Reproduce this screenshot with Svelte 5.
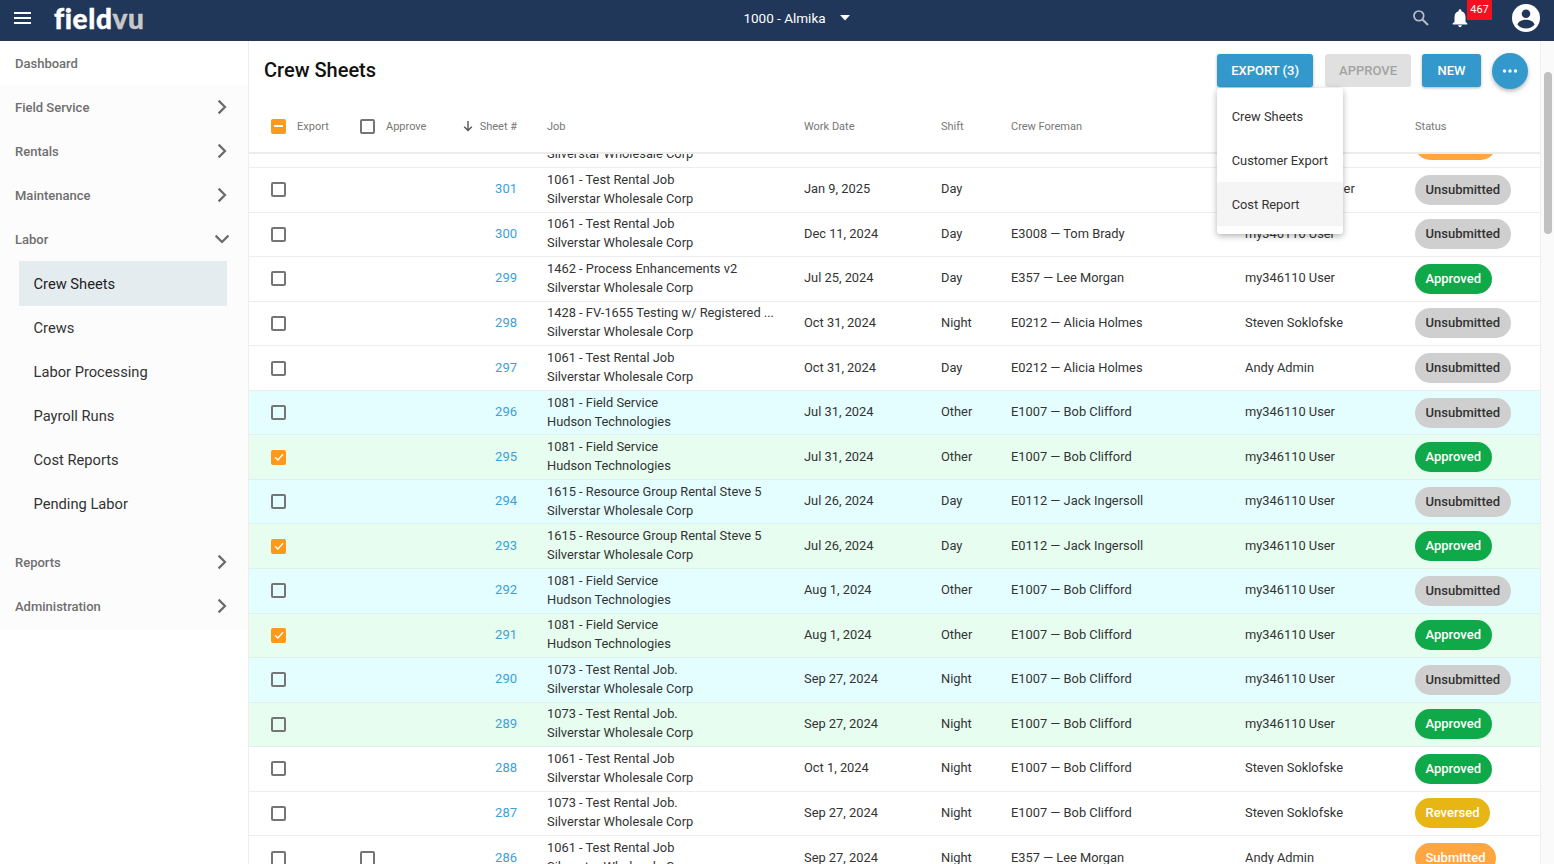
<script lang="ts">
	const navTop = [
		{ label: 'Field Service', open: false },
		{ label: 'Rentals', open: false },
		{ label: 'Maintenance', open: false },
		{ label: 'Labor', open: true }
	];
	const labor = ['Crew Sheets', 'Crews', 'Labor Processing', 'Payroll Runs', 'Cost Reports', 'Pending Labor'];
	const navBottom = ['Reports', 'Administration'];

	const silver = 'Silverstar Wholesale Corp';
	const hudson = 'Hudson Technologies';
	const bob = 'E1007 — Bob Clifford';
	const me = 'my346110 User';
	const steven = 'Steven Soklofske';

	const rows = [
		{ id: 302, job: '1061 - Test Rental Job', co: silver, date: 'Jan 9, 2025', shift: 'Day', foreman: '', by: '', status: 'Submitted' },
		{ id: 301, job: '1061 - Test Rental Job', co: silver, date: 'Jan 9, 2025', shift: 'Day', foreman: '', by: 'Customer Manager', status: 'Unsubmitted' },
		{ id: 300, job: '1061 - Test Rental Job', co: silver, date: 'Dec 11, 2024', shift: 'Day', foreman: 'E3008 — Tom Brady', by: me, status: 'Unsubmitted' },
		{ id: 299, job: '1462 - Process Enhancements v2', co: silver, date: 'Jul 25, 2024', shift: 'Day', foreman: 'E357 — Lee Morgan', by: me, status: 'Approved' },
		{ id: 298, job: '1428 - FV-1655 Testing w/ Registered ...', co: silver, date: 'Oct 31, 2024', shift: 'Night', foreman: 'E0212 — Alicia Holmes', by: steven, status: 'Unsubmitted' },
		{ id: 297, job: '1061 - Test Rental Job', co: silver, date: 'Oct 31, 2024', shift: 'Day', foreman: 'E0212 — Alicia Holmes', by: 'Andy Admin', status: 'Unsubmitted' },
		{ id: 296, job: '1081 - Field Service', co: hudson, date: 'Jul 31, 2024', shift: 'Other', foreman: bob, by: me, status: 'Unsubmitted', tint: 'cyan' },
		{ id: 295, job: '1081 - Field Service', co: hudson, date: 'Jul 31, 2024', shift: 'Other', foreman: bob, by: me, status: 'Approved', tint: 'green', checked: true },
		{ id: 294, job: '1615 - Resource Group Rental Steve 5', co: silver, date: 'Jul 26, 2024', shift: 'Day', foreman: 'E0112 — Jack Ingersoll', by: me, status: 'Unsubmitted', tint: 'cyan' },
		{ id: 293, job: '1615 - Resource Group Rental Steve 5', co: silver, date: 'Jul 26, 2024', shift: 'Day', foreman: 'E0112 — Jack Ingersoll', by: me, status: 'Approved', tint: 'green', checked: true },
		{ id: 292, job: '1081 - Field Service', co: hudson, date: 'Aug 1, 2024', shift: 'Other', foreman: bob, by: me, status: 'Unsubmitted', tint: 'cyan' },
		{ id: 291, job: '1081 - Field Service', co: hudson, date: 'Aug 1, 2024', shift: 'Other', foreman: bob, by: me, status: 'Approved', tint: 'green', checked: true },
		{ id: 290, job: '1073 - Test Rental Job.', co: silver, date: 'Sep 27, 2024', shift: 'Night', foreman: bob, by: me, status: 'Unsubmitted', tint: 'cyan' },
		{ id: 289, job: '1073 - Test Rental Job.', co: silver, date: 'Sep 27, 2024', shift: 'Night', foreman: bob, by: me, status: 'Approved', tint: 'green' },
		{ id: 288, job: '1061 - Test Rental Job', co: silver, date: 'Oct 1, 2024', shift: 'Night', foreman: bob, by: steven, status: 'Approved' },
		{ id: 287, job: '1073 - Test Rental Job.', co: silver, date: 'Sep 27, 2024', shift: 'Night', foreman: bob, by: steven, status: 'Reversed' },
		{ id: 286, job: '1061 - Test Rental Job', co: silver, date: 'Sep 27, 2024', shift: 'Night', foreman: 'E357 — Lee Morgan', by: 'Andy Admin', status: 'Submitted', approvable: true }
	];

	const exportOptions = ['Crew Sheets', 'Customer Export', 'Cost Report'];
</script>

{#snippet chevron(open)}
	<svg class="chev" class:open viewBox="0 0 24 24" width="24" height="24">
		<path d="M8.6 5.6 15 12l-6.4 6.4" fill="none" stroke="#6b6b6b" stroke-width="2.2" />
	</svg>
{/snippet}

{#snippet checkbox(state)}
	<span class="box {state}">
		{#if state === 'checked'}
			<svg viewBox="0 0 14 14" width="14" height="14"><path d="M3 7.2 5.9 10 11 4.2" fill="none" stroke="#fff" stroke-width="1.3" /></svg>
		{:else if state === 'mixed'}
			<i></i>
		{/if}
	</span>
{/snippet}

<div class="page">
	<header class="topbar">
		<div class="brand">
			<svg class="menu" viewBox="0 0 17 12" width="17" height="12">
				<path d="M0 1h17M0 6h17M0 11h17" stroke="#fff" stroke-width="1.9" fill="none" />
			</svg>
			<span class="logo">field<span>vu</span></span>
		</div>
		<div class="tenant">
			<span>1000 - Almika</span>
			<svg viewBox="0 0 10 6" width="10" height="6"><path d="M0 0h10L5 5.5z" fill="#fff" /></svg>
		</div>
		<div class="tools">
			<svg class="search" viewBox="0 0 20 20" width="18" height="18">
				<circle cx="7.6" cy="7.6" r="5.4" fill="none" stroke="#b9bec6" stroke-width="1.9" />
				<path d="m11.6 11.6 6.2 6.2" stroke="#b9bec6" stroke-width="2.2" />
			</svg>
			<div class="bell">
				<svg viewBox="0 0 24 24" width="22" height="22">
					<path d="M12 22c1.100 0 2-.9 2-2h-4c0 1.100.9 2 2 2zm6-6v-5c0-3.100-1.600-5.600-4.500-6.300V4c0-.8-.7-1.500-1.500-1.500s-1.500.7-1.500 1.500v.7C7.600 5.400 6 7.900 6 11v5l-2 2v1h16v-1z" fill="#fff" />
				</svg>
				<span class="badge">467</span>
			</div>
			<svg class="avatar" viewBox="0 0 28 28" width="28" height="28">
				<circle cx="14" cy="14" r="14" fill="#fff" />
				<circle cx="14" cy="9.700" r="4.300" fill="#21375a" />
				<path d="M5.400 20.500C6.400 17.200 10 15.700 14 15.700s7.600 1.500 8.600 4.800C20.600 23 17.500 24.400 14 24.400s-6.600-1.400-8.600-3.900z" fill="#21375a" />
			</svg>
		</div>
	</header>

	<div class="body">
		<nav class="side">
			<a class="top dash" href="#dashboard">Dashboard</a>
			<div class="rest">
				{#each navTop as item}
					<a class="top" href="#section">{item.label}{@render chevron(item.open)}</a>
				{/each}
				{#each labor as item, i}
					<a class="sub" class:current={i === 0} href="#labor">{item}</a>
				{/each}
				<div class="spacer"></div>
				{#each navBottom as item}
					<a class="top" href="#section">{item}{@render chevron(false)}</a>
				{/each}
			</div>
		</nav>

		<main class="main">
			<div class="content">
				<div class="titlebar">
					<h1>Crew Sheets</h1>
					<div class="actions">
						<div class="export-wrap">
							<button class="btn">EXPORT (3)</button>
							<ul class="menu-pop">
								{#each exportOptions as option, i}
									<li class:hover={i === 2}>{option}</li>
								{/each}
							</ul>
						</div>
						<button class="btn off">APPROVE</button>
						<button class="btn new">NEW</button>
						<button class="more" aria-label="More">
							<svg viewBox="0 0 16 4" width="16" height="4"><circle cx="2.500" cy="2" r="1.700" fill="#fff" /><circle cx="8" cy="2" r="1.700" fill="#fff" /><circle cx="13.500" cy="2" r="1.700" fill="#fff" /></svg>
						</button>
					</div>
				</div>

				<div class="grid thead">
					<div class="c-check">{@render checkbox('mixed')}<span>Export</span></div>
					<div class="c-check">{@render checkbox('empty')}<span>Approve</span></div>
					<div class="c-num">
						<svg viewBox="0 0 12 12" width="12" height="12"><path d="M6 1v9.500M2.200 6.800 6 10.500l3.800-3.700" fill="none" stroke="#555" stroke-width="1.400" /></svg>
						<span>Sheet #</span>
					</div>
					<div>Job</div>
					<div>Work Date</div>
					<div>Shift</div>
					<div>Crew Foreman</div>
					<div></div>
					<div>Status</div>
				</div>

				<div class="tbody">
					<div class="rows">
						{#each rows as row}
							<div class="grid row {row.tint ?? ''}">
								<div class="c-check">{@render checkbox(row.checked ? 'checked' : 'empty')}</div>
								<div class="c-check">{#if row.approvable}{@render checkbox('empty')}{/if}</div>
								<div class="c-num"><a href="#sheet">{row.id}</a></div>
								<div class="job"><div>{row.job}</div><div>{row.co}</div></div>
								<div>{row.date}</div>
								<div>{row.shift}</div>
								<div>{row.foreman}</div>
								<div>{row.by}</div>
								<div class="status"><span class="pill {row.status.toLowerCase()}">{row.status}</span></div>
							</div>
						{/each}
					</div>
				</div>
			</div>
			<div class="scrollbar"><div class="thumb"></div></div>
		</main>
	</div>
</div>

<style>
	:global(body) {
		font-family: Roboto, 'Liberation Sans', sans-serif;
		overflow: hidden;
	}

	.page {
		height: 864px;
		display: flex;
		flex-direction: column;
		overflow: hidden;
	}

	.topbar {
		height: 41px;
		flex: none;
		background: #21375a;
		display: grid;
		grid-template-columns: minmax(0, 1fr) auto minmax(0, 1fr);
		align-items: start;
		color: #fff;
	}

	.brand {
		display: flex;
		align-items: center;
		gap: 23px;
		padding-left: 14px;
		height: 36px;
	}

	.logo {
		font-family: Lato, sans-serif;
		font-weight: 900;
		font-size: 28px;
		line-height: 36px;
		letter-spacing: 0.6px;
		-webkit-text-stroke: 0.4px currentColor;
		color: #fff;
	}

	.logo span {
		color: #c8c8c8;
	}

	.tenant {
		display: flex;
		align-items: center;
		gap: 14px;
		font-size: 13.5px;
		height: 36px;
		padding-left: 39px;
	}

	.tools {
		display: flex;
		justify-content: flex-end;
		align-items: center;
		height: 36px;
		padding-right: 14px;
	}

	.bell {
		position: relative;
		width: 22px;
		height: 22px;
		margin-left: 19px;
		margin-right: 41px;
	}

	.badge {
		position: absolute;
		left: 18px;
		top: -7px;
		width: 25px;
		height: 20px;
		background: #f5101f;
		font-size: 11px;
		line-height: 19px;
		text-align: center;
	}

	.body {
		flex: 1;
		display: flex;
		min-height: 0;
	}

	.side {
		width: 248px;
		flex: none;
		border-right: 1px solid #eee;
		background: #fff;
	}

	.rest {
		background: #fcfcfc;
		padding-bottom: 1px;
	}

	.top {
		height: 44.1px;
		display: flex;
		align-items: center;
		justify-content: space-between;
		padding: 0 14px 0 15px;
		font-size: 13px;
		font-weight: 500;
		color: #6f6f6f;
		text-decoration: none;
	}

	.chev.open {
		transform: rotate(90deg);
	}

	.sub {
		display: flex;
		align-items: center;
		height: 44.1px;
		margin: 0 21px 0 19px;
		padding-left: 14.5px;
		font-size: 14.7px;
		color: #333;
		text-decoration: none;
	}

	.sub.current {
		background: #e5ecf0;
		color: #222;
	}

	.spacer {
		height: 14px;
	}

	.main {
		flex: 1;
		min-width: 0;
		display: flex;
	}

	.content {
		flex: 1;
		min-width: 0;
		display: flex;
		flex-direction: column;
	}

	.titlebar {
		height: 59px;
		flex: none;
		display: flex;
		align-items: center;
		justify-content: space-between;
		padding: 0 12px 0 15px;
	}

	h1 {
		margin: 0 0 2px;
		font-size: 20px;
		font-weight: 500;
		color: #111;
	}

	.actions {
		display: flex;
		align-items: center;
		gap: 11px;
	}

	.export-wrap {
		position: relative;
		display: flex;
		margin-right: 1px;
	}

	.btn {
		height: 33px;
		padding: 0 14px;
		border: none;
		border-radius: 3px;
		background: #3399cc;
		color: #fff;
		font: 500 13px Roboto, sans-serif;
		box-shadow: 0 1px 3px rgba(0, 0, 0, 0.3);
	}

	.btn.new {
		padding: 0 15.5px;
	}

	.btn.off {
		background: #e0e0e0;
		color: #a3a3a3;
		box-shadow: none;
	}

	.more {
		width: 36px;
		height: 36px;
		border: none;
		border-radius: 50%;
		background: #3399cc;
		display: flex;
		align-items: center;
		justify-content: center;
		box-shadow: 0 2px 4px rgba(0, 0, 0, 0.3);
		padding: 0;
	}

	.menu-pop {
		position: absolute;
		left: 0;
		top: 34px;
		width: 126px;
		margin: 0;
		padding: 6px 0 8px;
		list-style: none;
		background: #fff;
		border-radius: 3px;
		box-shadow: 0 2px 6px rgba(0, 0, 0, 0.3);
		z-index: 5;
	}

	.menu-pop li {
		height: 44px;
		padding-left: 14.5px;
		display: flex;
		align-items: center;
		font-size: 12.85px;
		color: #333;
	}

	.menu-pop li.hover {
		background: #f5f5f5;
	}

	.grid {
		display: grid;
		grid-template-columns: 89px 88px 99px 257px 137px 70px 234px 170px 1fr;
		align-items: center;
		font-size: 12.85px;
		color: #333;
	}

	.grid > div {
		white-space: nowrap;
	}

	.thead {
		height: 52px;
		flex: none;
		border-bottom: 2px solid #ececec;
		font-size: 11px;
		color: #777;
		padding-left: 22px;
	}

	.c-check {
		display: flex;
		align-items: center;
		gap: 11px;
	}

	.c-num {
		display: flex;
		align-items: center;
		justify-content: flex-end;
		gap: 6px;
		padding-right: 30px;
		font-size: 13px;
	}

	.thead .c-num {
		font-size: 11px;
	}

	.c-num a {
		color: #3da0d8;
		text-decoration: none;
	}

	.box {
		flex: none;
		width: 15px;
		height: 15px;
		box-sizing: border-box;
		border: 2px solid #757575;
		border-radius: 2px;
		position: relative;
		display: block;
	}

	.box.checked,
	.box.mixed {
		background: #fd9a1b;
		border: none;
	}

	.box svg {
		display: block;
		margin: 0.5px;
	}

	.box i {
		position: absolute;
		left: 3px;
		right: 3px;
		top: 6.500px;
		height: 2px;
		background: #fff;
	}

	.tbody {
		flex: 1;
		min-height: 0;
		overflow: hidden;
	}

	.rows {
		margin-top: -30.500px;
	}

	.row {
		height: 44.55px;
		box-sizing: border-box;
		border-bottom: 1px solid #ededed;
		padding-left: 22px;
		background: #fff;
	}

	.row.cyan {
		background: #e4feff;
		border-bottom-color: #dcf1f1;
	}

	.row.green {
		background: #e6fdf0;
		border-bottom-color: #dcf1ea;
	}

	.row > div:not(.c-check, .status) {
		padding-bottom: 2px;
	}

	.job {
		line-height: 19px;
	}

	.pill {
		display: inline-block;
		height: 30px;
		line-height: 30px;
		padding: 0 10.5px;
		border-radius: 15px;
		font-weight: 500;
		font-size: 13px;
		color: #fff;
	}

	.pill.unsubmitted {
		background: #cfcfcf;
		color: #333;
	}

	.pill.approved {
		background: #0fa94a;
	}

	.pill.reversed {
		background: #e8b614;
	}

	.pill.submitted {
		background: #ffa640;
	}

	.scrollbar {
		width: 14px;
		flex: none;
		background: #fafafa;
		border-left: 1px solid #eee;
		box-sizing: border-box;
		padding: 31px 2px 0 3px;
	}

	.thumb {
		height: 162px;
		background: #c1c1c1;
		border-radius: 5px;
	}
</style>
